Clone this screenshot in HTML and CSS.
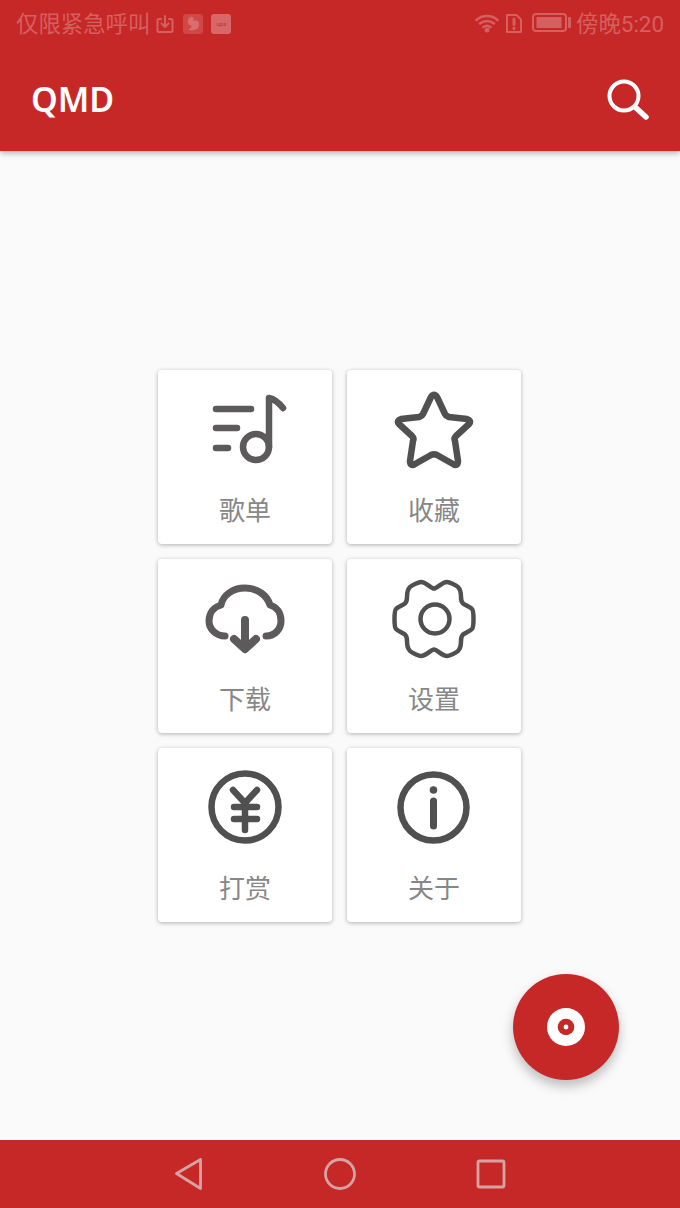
FILE: index.html
```html
<!DOCTYPE html>
<html lang="zh-CN">

<head>
    <meta charset="UTF-8">
    <meta name="viewport" content="width=device-width, initial-scale=1.0">
    <title>QMD</title>
    <link rel="stylesheet" href="styles.css">
</head>

<body>
    <header class="app-header">
        <!-- Status bar -->
        <div class="status-bar">
            <div class="status-left">
                <span class="status-text">仅限紧急呼叫</span>
                <svg class="status-icon usb-icon" viewBox="0 0 18 18">
                    <path d="M5 4H3Q1.5 4 1.5 5.5V15.5Q1.5 17 3 17H15Q16.5 17 16.5 15.5V5.5Q16.5 4 15 4H13M9 1V12M5.5 8.5L9 12L12.5 8.5" />
                </svg>
                <svg class="status-icon app-icon" viewBox="0 0 20 20">
                    <rect class="solid-soft" x="0" y="0" width="20" height="20" rx="3" />
                    <path class="solid-fade" d="M7 3C10 2 12 4 10 7C14 5 17 8 16 12C15 16 10 17 5 16C8 14 9 13 8 11C5 12 3 7 7 3Z" />
                </svg>
                <span class="app-badge">ups</span>
            </div>
            <div class="status-right">
                <svg class="status-icon wifi-icon" viewBox="0 0 24 20">
                    <path d="M1.5 7C7 1.5 17 1.5 22.5 7M5 10.5C9 7 15 7 19 10.5M8.5 14C10.5 12.5 13.5 12.5 15.5 14" />
                    <circle class="solid" cx="12" cy="17" r="2.5" />
                </svg>
                <svg class="status-icon sim-icon" viewBox="0 0 16 19">
                    <path d="M1 1H10.5L15 5.5V18H1Z" />
                    <path class="sim-mark" d="M8 5V10.5M8 14V14.5" />
                </svg>
                <svg class="status-icon battery-icon" viewBox="0 0 39 19">
                    <rect x="1" y="1" width="33" height="17" rx="3" />
                    <rect class="solid" x="4.5" y="4" width="25" height="11" />
                    <rect class="solid" x="36" y="4" width="3" height="11" rx="1" />
                </svg>
                <span class="status-text status-time">傍晚5:20</span>
            </div>
        </div>

        <!-- Toolbar -->
        <div class="toolbar">
            <span class="toolbar-title">QMD</span>
            <svg class="search-icon" viewBox="0 0 44 44">
                <circle cx="18" cy="18" r="14.5" />
                <path class="search-handle" d="M29 29L40 39" />
            </svg>
        </div>
    </header>

    <main class="home">
        <div class="menu-grid">
            <div class="menu-card">
                <svg class="menu-icon icon-soft" viewBox="0 0 88 88">
                    <path d="M15 26H50M15 45H36M15 65H27" />
                    <circle cx="55" cy="64" r="13" />
                    <path d="M68 64V15C73 16 78 20 82 25" />
                </svg>
                <span class="menu-label">歌单</span>
            </div>
            <div class="menu-card">
                <svg class="menu-icon" viewBox="0 0 88 88">
                    <path d="M41 14C43 11 45 11 47 14L55 31C56 33 57 33 59 34L77 36C80 37 81 39 79 41L66 53C65 54 64 56 65 58L68 78C68 82 66 83 63 81L47 72C45 71 43 71 41 72L25 81C22 83 20 82 20 78L23 58C24 56 23 54 22 53L9 41C7 39 8 37 11 36L29 34C31 33 32 33 33 31Z" />
                </svg>
                <span class="menu-label">收藏</span>
            </div>
            <div class="menu-card">
                <svg class="menu-icon icon-soft icon-bold" viewBox="0 0 88 88">
                    <path d="M24 64C15 64 8 57 8 49C8 41 13 35 20 33C22 23 32 16 44 16C56 16 66 23 69 33C76 35 80 41 80 49C80 57 74 64 65 64" />
                    <path class="cloud-arrow" d="M44 48V76M33 67L44 77L55 67" />
                </svg>
                <span class="menu-label">下载</span>
            </div>
            <div class="menu-card">
                <svg class="menu-icon icon-thin" viewBox="0 0 88 88">
                    <path d="M44 16.5C47 16.5 52 10 57 10C59 10 66 13 68 15C70 17 71 22 71 25C71 28 71.5 30 73 31.5C75 33 80 35 82 37C83 38 83.5 41 83.5 47C83.5 53 83 56 82 57C80 59 75 61 73 62.5C71.5 64 71 66 71 69C71 72 70 77 68 79C66 81 59 84 57 84C52 84 47 77.5 44 77.5C41 77.5 36 84 31 84C29 84 22 81 20 79C18 77 17 72 17 69C17 66 16.5 64 15 62.5C13 61 8 59 6 57C5 56 4.5 53 4.5 47C4.5 41 5 38 6 37C8 35 13 33 15 31.5C16.5 30 17 28 17 25C17 22 18 17 20 15C22 13 29 10 31 10C36 10 41 16.5 44 16.5Z" />
                    <circle cx="45" cy="47" r="14.5" />
                </svg>
                <span class="menu-label">设置</span>
            </div>
            <div class="menu-card">
                <svg class="menu-icon" viewBox="0 0 88 88">
                    <circle cx="44" cy="46" r="33.5" />
                    <path d="M32 29L44 42L56 29M33 46H56M33 58H56M44 42V69" />
                </svg>
                <span class="menu-label">打赏</span>
            </div>
            <div class="menu-card">
                <svg class="menu-icon" viewBox="0 0 88 88">
                    <circle cx="43.5" cy="46.5" r="33" />
                    <circle class="solid" cx="43.5" cy="29" r="3.8" />
                    <path class="info-bar" d="M43.5 40V65" />
                </svg>
                <span class="menu-label">关于</span>
            </div>
        </div>

        <button class="fab" type="button">
            <svg class="fab-icon" viewBox="0 0 40 40">
                <circle class="disc-outer" cx="20" cy="20" r="19" />
                <circle class="disc-mid" cx="20" cy="20" r="8.3" />
                <circle class="disc-outer" cx="20" cy="20" r="2.4" />
            </svg>
        </button>
    </main>

    <!-- Navigation bar -->
    <nav class="nav-bar">
        <svg class="nav-icon" viewBox="0 0 32 36">
            <path d="M27.5 3.5L3.5 17.5L27.5 32.5Z" />
        </svg>
        <svg class="nav-icon" viewBox="0 0 32 36">
            <circle cx="16" cy="18" r="14.5" />
        </svg>
        <svg class="nav-icon" viewBox="0 0 32 36">
            <rect x="3" y="5" width="26" height="26" rx="1.5" />
        </svg>
    </nav>
</body>

</html>
```

FILE: styles.css
```css
* {
    margin: 0;
    padding: 0;
    box-sizing: border-box;
}

body {
    display: flex;
    flex-direction: column;
    height: 100vh;
    overflow: hidden;
    font-family: Roboto, "Noto Sans CJK SC", sans-serif;
    background-color: #fafafa;
}

svg {
    display: block;
    fill: none;
    stroke-linecap: round;
    stroke-linejoin: round;
}

.app-header {
    position: relative;
    z-index: 1;
    background-color: #c62828;
    box-shadow: 0 2px 6px rgba(0, 0, 0, 0.3);
}

.status-bar {
    display: flex;
    justify-content: space-between;
    height: 48px;
    padding: 13px 16px 0;
    color: #d65f5f;
}

.status-left,
.status-right {
    display: flex;
    align-items: flex-start;
    height: 22px;
}

.status-text {
    font-size: 22.4px;
    line-height: 22px;
}

.status-icon {
    stroke: #d65f5f;
    stroke-width: 2;
}

.solid {
    fill: #d65f5f;
    stroke: none;
}

.solid-soft {
    fill: #cf4747;
    stroke: none;
}

.solid-fade {
    fill: #dc6d6d;
    stroke: none;
}

.usb-icon {
    width: 18px;
    height: 18px;
    margin: 2px 0 0 6px;
}

.app-icon {
    width: 20px;
    height: 20px;
    margin: 1px 0 0 9px;
}

.app-badge {
    width: 20px;
    height: 20px;
    margin: 1px 0 0 8px;
    border-radius: 3px;
    background-color: #d96767;
    color: #a83a3a;
    font-size: 6px;
    line-height: 20px;
    text-align: center;
}

.wifi-icon {
    width: 24px;
    height: 20px;
    stroke-width: 2.5;
}

.sim-icon {
    width: 16px;
    height: 19px;
    margin: 1px 0 0 7px;
}

.sim-mark {
    stroke-width: 3;
}

.battery-icon {
    width: 39px;
    height: 19px;
    margin: 0 0 0 10px;
}

.status-time {
    margin-left: 5px;
}

.toolbar {
    display: flex;
    align-items: center;
    justify-content: space-between;
    height: 103px;
    padding: 0 30px 0 31px;
}

.toolbar-title {
    padding-bottom: 2px;
    color: #fff;
    font-family: "Noto Sans", sans-serif;
    font-size: 34px;
    font-weight: 600;
}

.search-icon {
    width: 44px;
    height: 44px;
    stroke: #fff;
    stroke-width: 4;
}

.search-handle {
    stroke-width: 5.5;
}

.home {
    position: relative;
    flex: 1;
    padding: 219px 0 0 158px;
}

.menu-grid {
    display: grid;
    grid-template-columns: 174px 174px;
    grid-auto-rows: 174px;
    gap: 15px;
}

.menu-card {
    display: flex;
    flex-direction: column;
    align-items: center;
    padding-top: 13px;
    background-color: #fff;
    border-radius: 4px;
    box-shadow: 0 1px 4px rgba(0, 0, 0, 0.3);
}

.menu-icon {
    width: 88px;
    height: 88px;
    stroke: #505050;
    stroke-width: 6.5;
}

.icon-soft {
    stroke: #5c5a5b;
}

.icon-bold {
    stroke-width: 7;
}

.cloud-arrow {
    stroke-width: 8;
}

.icon-thin {
    stroke-width: 4.5;
}

.info-bar {
    stroke-width: 7;
}

.menu-icon .solid {
    fill: #505050;
}

.menu-label {
    margin-top: 25px;
    color: #878787;
    font-size: 26px;
    line-height: 30px;
}

.fab {
    position: absolute;
    right: 61px;
    bottom: 60px;
    display: flex;
    align-items: center;
    justify-content: center;
    width: 106px;
    height: 106px;
    border: none;
    border-radius: 50%;
    background-color: #c62828;
    box-shadow: 0 6px 12px rgba(0, 0, 0, 0.25);
}

.fab-icon {
    width: 40px;
    height: 40px;
}

.disc-outer {
    fill: #fff;
}

.disc-mid {
    fill: #c62828;
}

.nav-bar {
    display: flex;
    align-items: center;
    justify-content: center;
    gap: 119px;
    height: 68px;
    background-color: #c62828;
}

.nav-icon {
    width: 32px;
    height: 36px;
    stroke: #d6a3a3;
    stroke-width: 2.8;
}
```
